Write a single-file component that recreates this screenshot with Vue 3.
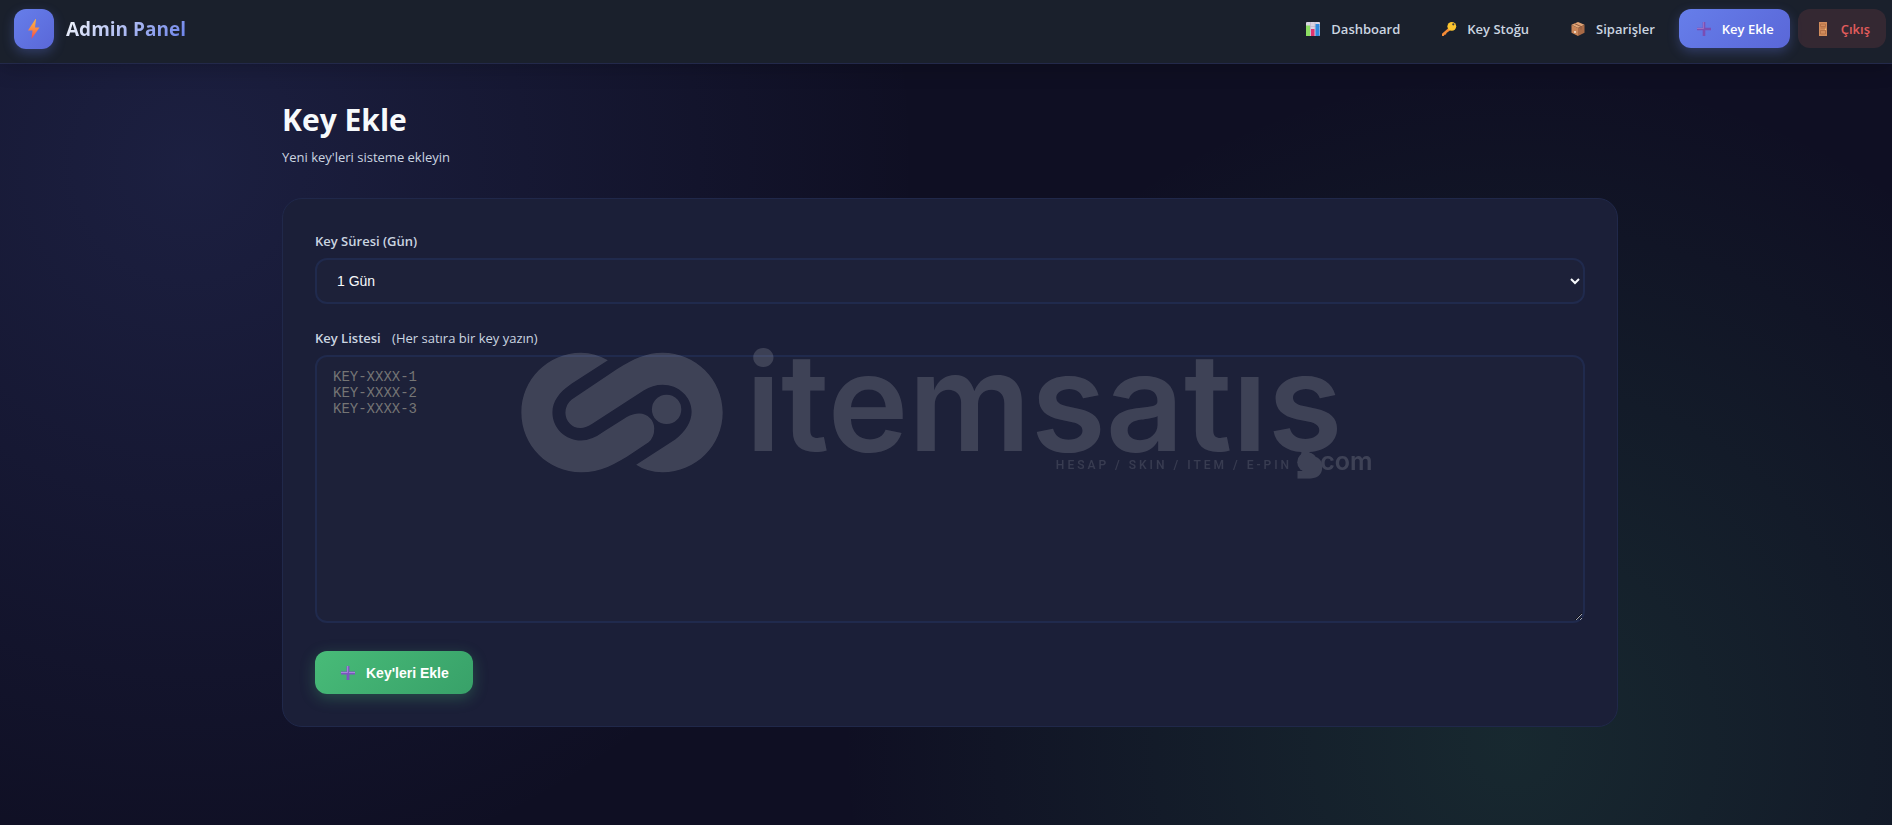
<template>
  <div class="page">
    <header class="navbar">
      <a href="#" class="brand">
        <span class="brand-icon">
          <svg viewBox="0 0 24 24" width="24" height="24" aria-hidden="true">
            <defs>
              <linearGradient id="bolt" x1="0" y1="0" x2="0" y2="1">
                <stop offset="0" stop-color="#fdb740" />
                <stop offset="0.5" stop-color="#f98a45" />
                <stop offset="1" stop-color="#f4414f" />
              </linearGradient>
            </defs>
            <path d="M13.500 2 L6 13.500 L10.500 13.500 L9.500 22 L17.500 10.500 L13 10.500 L14 2 Z" fill="url(#bolt)" />
          </svg>
        </span>
        <span class="brand-name">Admin Panel</span>
      </a>

      <nav class="nav-links">
        <a
          v-for="link in links"
          :key="link.id"
          href="#"
          class="nav-link"
          :class="{ active: link.id === current, logout: link.id === 'logout' }"
          @click.prevent="current = link.id === 'logout' ? current : link.id"
        >
          <svg v-if="link.id === 'dashboard'" class="icon" viewBox="0 0 18 18" aria-hidden="true">
            <rect x="2" y="2" width="14" height="14" rx="1" fill="#d9d3e3" />
            <path d="M2 6.500 H16 M2 11 H16 M6.500 2 V16 M11 2 V16" stroke="#b9b0c8" stroke-width="0.6" />
            <rect x="2" y="5.500" width="4" height="10.500" fill="#8bdc62" />
            <rect x="7" y="9" width="3.500" height="7" fill="#e0336f" />
            <rect x="11.500" y="4" width="4" height="12" fill="#2f8ade" />
          </svg>
          <svg v-else-if="link.id === 'stock'" class="icon" viewBox="0 0 18 18" aria-hidden="true">
            <path d="M9 7.500 L11 9.800 L6.500 13 L6 14.500 L4.500 14.800 L3.800 16 L2 16 L2 13.800 Z" fill="#f58b36" />
            <circle cx="11.800" cy="6.300" r="4.400" fill="#fcc52f" />
            <circle cx="13.300" cy="4.300" r="1.100" fill="#3c3a3a" />
          </svg>
          <svg v-else-if="link.id === 'orders'" class="icon" viewBox="0 0 18 18" aria-hidden="true">
            <path d="M9 2 L15.500 4.800 L9 8 L2.500 4.800 Z" fill="#e0a476" />
            <path d="M2.500 4.800 L9 8 V16 L2.500 12.800 Z" fill="#c98558" />
            <path d="M15.500 4.800 L9 8 V16 L15.500 12.800 Z" fill="#a96a46" />
            <path d="M5.300 3.500 L12 6.500 V9.500" stroke="#8f5a3e" stroke-width="1" fill="none" />
            <rect x="5" y="11" width="2" height="2" fill="#ecd2bd" />
          </svg>
          <svg v-else-if="link.id === 'add'" class="icon" viewBox="0 0 18 18" aria-hidden="true">
            <path d="M9 2 V16 M2 9 H16" stroke="#7a4db4" stroke-width="2.600" />
            <path d="M8.600 2 V8.500 H2" stroke="#a27bc9" stroke-width="0.8" fill="none" />
          </svg>
          <svg v-else class="icon" viewBox="0 0 18 18" aria-hidden="true">
            <rect x="5" y="2" width="8" height="14" fill="#d18c5c" />
            <path d="M6.500 4 H11.500 V6.500 H6.500 Z M6.500 8 H11.500 M6.500 10.500 H11.500 V14 H6.500 Z" stroke="#b06d43" stroke-width="0.8" fill="none" />
            <circle cx="11.500" cy="9.300" r="0.7" fill="#f4cf74" />
          </svg>
          {{ link.label }}
        </a>
      </nav>
    </header>

    <main class="content">
      <h1>Key Ekle</h1>
      <p class="subtitle">Yeni key'leri sisteme ekleyin</p>

      <form class="card" @submit.prevent="addKeys">
        <label for="duration">Key Süresi (Gün)</label>
        <select id="duration" v-model="duration">
          <option v-for="day in durations" :key="day" :value="day">{{ day }} Gün</option>
        </select>

        <label for="keys">Key Listesi <span class="hint">(Her satıra bir key yazın)</span></label>
        <textarea id="keys" v-model="keyList" :placeholder="placeholder"></textarea>

        <button type="submit" class="btn-submit">
          <svg class="icon" viewBox="0 0 18 18" aria-hidden="true">
            <path d="M9 2 V16 M2 9 H16" stroke="#7d55c0" stroke-width="2.800" />
            <path d="M8.600 2 V8.500 H2 M16 8.500 H10" stroke="#ad8be0" stroke-width="0.9" fill="none" />
          </svg>
          Key'leri Ekle
        </button>
      </form>
    </main>

    <!-- Watermark over the whole page -->
    <div class="watermark" aria-hidden="true">
      <svg viewBox="0 0 850 120">
        <g transform="translate(-20 -22) scale(0.33333)">
          <path d="M323 91 Q285 68 243 68 C144 68 64 148 64 247 C64 346 144 426 243 426 C300 426 345 403 400 366 L445 336 Q462 322 462 295 C462 270 442 250 417 250 Q398 250 380 261 L310 305 Q275 331 243 331 C196 331 157 294 157 247 C157 215 175 187 215 160 Z" />
          <path d="M408 404 Q440 426 487 426 C586 426 667 346 667 247 C667 148 586 68 487 68 C440 68 400 85 350 118 L215 208 Q196 223 196 248 C196 273 216 294 241 294 Q256 294 275 282 L430 181 Q458 164 487 164 C535 164 574 200 574 245 C574 275 555 305 525 328 Z" />
          <circle cx="499" cy="238" r="44" />
        </g>
        <text x="225" y="99" class="wm-name">itemsatış</text>
        <text x="535" y="117" class="wm-tagline">HESAP / SKIN / ITEM / E-PIN</text>
        <circle cx="786" cy="110" r="10" />
        <text x="799" y="118" class="wm-com">com</text>
      </svg>
    </div>
  </div>
</template>

<script setup>
import { ref } from 'vue';

const links = [
  { id: 'dashboard', label: 'Dashboard' },
  { id: 'stock', label: 'Key Stoğu' },
  { id: 'orders', label: 'Siparişler' },
  { id: 'add', label: 'Key Ekle' },
  { id: 'logout', label: 'Çıkış' },
];

const durations = [1, 7, 30];
const placeholder = 'KEY-XXXX-1\nKEY-XXXX-2\nKEY-XXXX-3';

const current = ref('add');
const duration = ref(1);
const keyList = ref('');

// Clear the list once the keys are submitted
const addKeys = () => {
  keyList.value = '';
};
</script>

<style>
body {
  margin: 0;
  background: #0f0f23;
}
</style>

<style scoped>
* {
  box-sizing: border-box;
}

.page {
  min-height: 100vh;
  color: #f7fafc;
  font-family: "Open Sans", "Noto Sans", sans-serif;
  font-size: 13px;
  line-height: 20px;
  background:
    radial-gradient(circle at 10% 20%, rgba(102, 126, 234, 0.15), transparent 40%),
    radial-gradient(circle at 80% 90%, rgba(72, 187, 120, 0.15), transparent 40%),
    #0f0f23;
}

.navbar {
  display: flex;
  justify-content: space-between;
  align-items: flex-start;
  height: 64px;
  padding: 9px 6px 0 14px;
  background: #1a202c;
  border-bottom: 1px solid #23294a;
  box-shadow: 0 4px 20px rgba(0, 0, 0, 0.2);
}

.brand {
  display: flex;
  align-items: center;
  gap: 12px;
  text-decoration: none;
}

.brand-icon {
  display: flex;
  align-items: center;
  justify-content: center;
  width: 40px;
  height: 40px;
  border-radius: 12px;
  background: linear-gradient(135deg, #667eea, #5a67d8);
  box-shadow: 0 4px 12px rgba(102, 126, 234, 0.3);
}

.brand-name {
  font-size: 19px;
  font-weight: 700;
  line-height: 28px;
  color: transparent;
  background: linear-gradient(135deg, #f7fafc, #667eea);
  background-clip: text;
}

.nav-links {
  display: flex;
  gap: 8px;
}

.nav-link {
  display: flex;
  align-items: center;
  gap: 9px;
  height: 39px;
  padding: 0 16px;
  border-radius: 12px;
  color: #cbd5e0;
  font-weight: 600;
  text-decoration: none;
}

.nav-link.active {
  color: #fff;
  background: linear-gradient(135deg, #667eea, #5a67d8);
  box-shadow: 0 4px 12px rgba(102, 126, 234, 0.3);
}

.nav-link.logout {
  color: #e25c5c;
  background: rgba(245, 101, 101, 0.12);
}

.icon {
  flex: none;
  width: 18px;
  height: 18px;
}

.content {
  max-width: 1408px;
  margin: 0 auto;
  padding: 34px 32px 32px 40px;
}

h1 {
  margin: 0 0 6px;
  font-size: 30px;
  font-weight: 700;
  line-height: 43px;
}

.subtitle {
  margin: 0 0 31px;
  color: #cbd5e0;
}

.card {
  padding: 32px;
  border: 1px solid #20284a;
  border-radius: 20px;
  background: #1b1f38;
}

label {
  display: block;
  margin-bottom: 7px;
  color: #cbd5e0;
  font-weight: 600;
}

.hint {
  margin-left: 8px;
  font-weight: 400;
}

select,
textarea {
  display: block;
  width: 100%;
  border: 2px solid #202a4d;
  border-radius: 12px;
  background: #1d2139;
  color: #f7fafc;
  outline: none;
}

select {
  height: 46px;
  margin-bottom: 24px;
  padding: 0 16px;
  font-family: "Liberation Sans", sans-serif;
  font-size: 14px;
}

textarea {
  height: 268px;
  margin-bottom: 28px;
  padding: 12px 16px;
  font-family: "Liberation Mono", monospace;
  font-size: 14px;
  line-height: 16px;
  resize: vertical;
}

textarea::placeholder {
  color: #757575;
}

.btn-submit {
  display: flex;
  align-items: center;
  gap: 9px;
  height: 43px;
  padding: 0 24px;
  border: none;
  border-radius: 12px;
  color: #fff;
  font-family: "Liberation Sans", sans-serif;
  font-size: 14px;
  font-weight: 700;
  background: linear-gradient(135deg, #48bb78, #38a169);
  box-shadow: 0 4px 15px rgba(72, 187, 120, 0.3);
  cursor: pointer;
}

.watermark {
  position: fixed;
  inset: 0;
  display: grid;
  place-items: center;
  pointer-events: none;
  opacity: 0.15;
}

.watermark svg {
  width: 45%;
  overflow: visible;
  fill: #fff;
}

.wm-name {
  font-family: Inter, sans-serif;
  font-size: 136px;
  font-weight: 600;
}

.wm-tagline {
  font-family: Roboto, sans-serif;
  font-size: 12px;
  font-weight: 500;
  letter-spacing: 3px;
  opacity: 0.8;
}

.wm-com {
  font-family: Inter, sans-serif;
  font-size: 25px;
  font-weight: 600;
}
</style>
